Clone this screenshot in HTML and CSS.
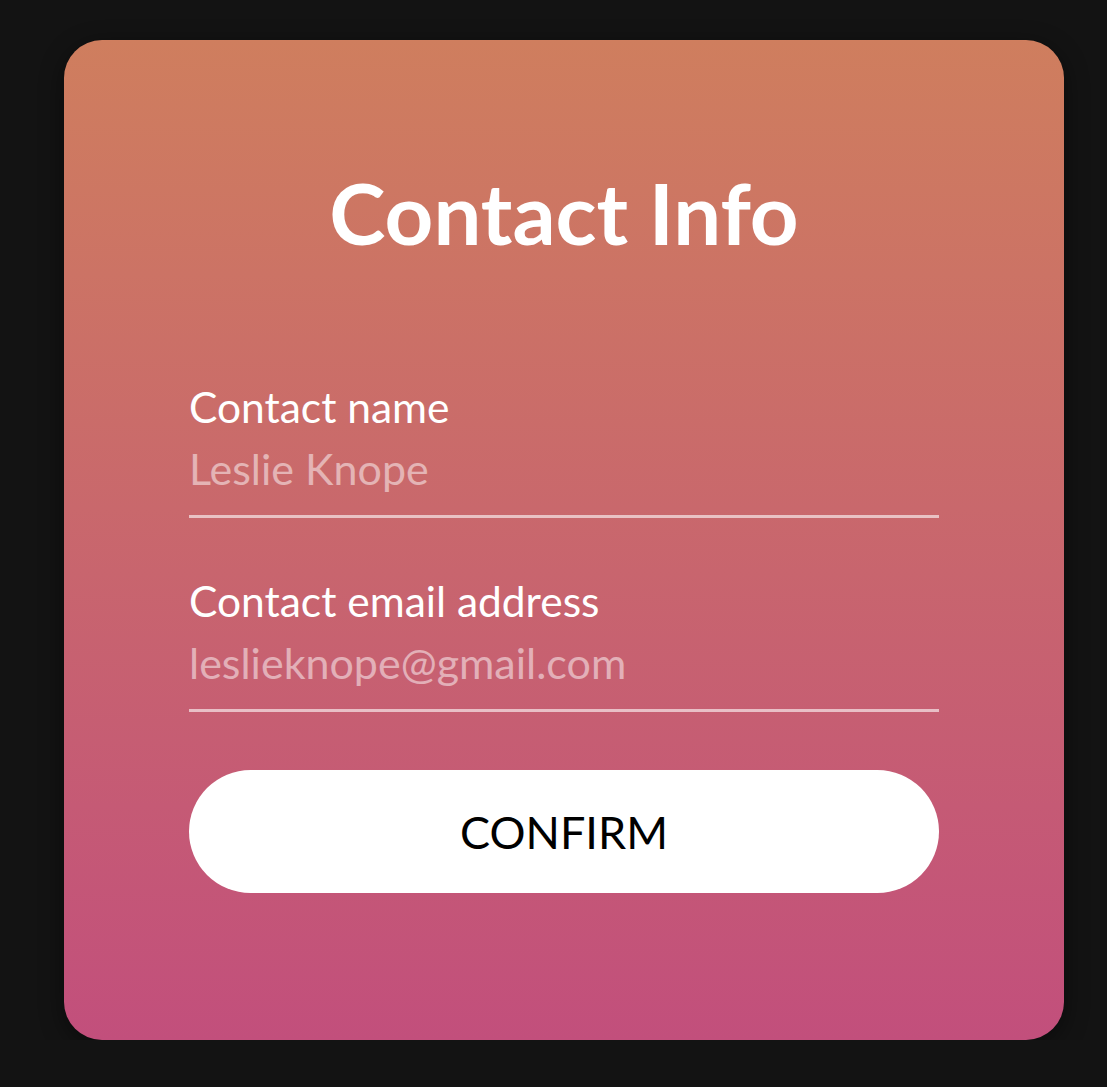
FILE: index.html
```html
<!DOCTYPE html>
<html lang="en">
<head>
<meta charset="utf-8">
<title>Contact Info</title>
<link rel="stylesheet" href="styles.css">
</head>
<body>
<main class="card">
  <h1 class="title">Contact Info</h1>
  <form class="form">
    <label class="field">
      <span class="label">Contact name</span>
      <input class="input" type="text" placeholder="Leslie Knope">
    </label>
    <label class="field">
      <span class="label">Contact email address</span>
      <input class="input" type="email" placeholder="leslieknope@gmail.com">
    </label>
    <button class="button" type="button">CONFIRM</button>
  </form>
</main>
</body>
</html>
```

FILE: styles.css
```css
html, body {
  margin: 0;
  padding: 0;
  background: #131313;
}
body {
  padding: 40px 0 0 64px;
  font-family: "Lato", "Noto Sans", sans-serif;
}
.card {
  box-sizing: border-box;
  width: 1000px;
  height: 1000px;
  border-radius: 38px;
  background: linear-gradient(180deg, #cf7e5e 0%, #c24f7c 100%);
  box-shadow: 0 6px 24px rgba(0, 0, 0, 0.45);
  padding: 130px 125px 0;
  display: flex;
  flex-direction: column;
  align-items: center;
}
.title {
  margin: 0;
  color: #fff;
  font-size: 85px;
  font-weight: 700;
  line-height: 85px;
}
.form {
  width: 100%;
  display: flex;
  flex-direction: column;
  margin-top: 127px;
}
.field {
  display: flex;
  flex-direction: column;
  border-bottom: 3px solid rgba(255, 255, 255, 0.6);
  margin-bottom: 58px;
}
.label {
  color: #fff;
  font-size: 42.5px;
  line-height: 50px;
}
.input {
  border: 0;
  background: transparent;
  font-family: inherit;
  font-size: 43px;
  line-height: 52px;
  padding: 11px 0 20px;
  color: #fff;
  outline: none;
}
.input::placeholder {
  color: rgba(255, 255, 255, 0.5);
}
.button {
  height: 123px;
  border: 0;
  border-radius: 62px;
  background: #fff;
  color: #000;
  font-family: inherit;
  font-size: 45px;
  cursor: pointer;
}
```
